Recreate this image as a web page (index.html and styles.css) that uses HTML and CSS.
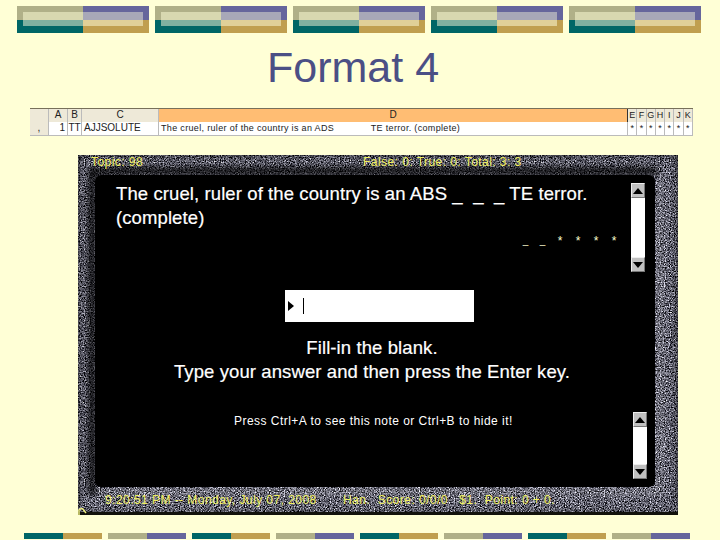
FILE: index.html
```html
<!DOCTYPE html>
<html lang="en">
<head>
<meta charset="utf-8">
<title>Format 4</title>
<link rel="stylesheet" href="styles.css">
</head>
<body>
<div class="slide">
  <div class="top-tiles">
    <div class="tile"><i class="t1"></i><i class="t2"></i><i class="t3"></i><i class="t4"></i></div>
    <div class="tile"><i class="t1"></i><i class="t2"></i><i class="t3"></i><i class="t4"></i></div>
    <div class="tile"><i class="t1"></i><i class="t2"></i><i class="t3"></i><i class="t4"></i></div>
    <div class="tile"><i class="t1"></i><i class="t2"></i><i class="t3"></i><i class="t4"></i></div>
    <div class="tile"><i class="t1"></i><i class="t2"></i><i class="t3"></i><i class="t4"></i></div>
  </div>
  <h1 class="title">Format 4</h1>
  <div class="sheet">
    <div class="c mark hd"></div><div class="c hd">A</div><div class="c hd">B</div><div class="c hd">C</div><div class="c hd sel">D</div>
    <div class="c hd s">E</div><div class="c hd s">F</div><div class="c hd s">G</div><div class="c hd s">H</div><div class="c hd s">I</div><div class="c hd s">J</div><div class="c hd s">K</div>
    <div class="c mark">,</div><div class="c num">1</div><div class="c">TT</div><div class="c left">AJJSOLUTE</div><div class="c left d">The cruel, ruler of the country is an ADS &nbsp; &nbsp; &nbsp; &nbsp; &nbsp; &nbsp; TE terror. (complete)</div>
    <div class="c s">*</div><div class="c s">*</div><div class="c s">*</div><div class="c s">*</div><div class="c s">*</div><div class="c s">*</div><div class="c s">*</div>
  </div>
  <div class="screen">
    <svg class="grain" width="600" height="360" aria-hidden="true">
      <defs>
        <filter id="n" x="0" y="0" width="100%" height="100%" color-interpolation-filters="sRGB">
          <feTurbulence type="fractalNoise" baseFrequency="0.8" numOctaves="2" seed="7"/>
          <feColorMatrix type="matrix" values="1.4 1.4 0 0 -1.02  1.4 1.4 0 0 -1.02  1.45 1.45 0 0 -1.02  0 0 0 0 1"/>
        </filter>
        <filter id="b" x="-10%" y="-10%" width="120%" height="120%"><feGaussianBlur stdDeviation="4"/></filter>
        <filter id="b2" x="-10%" y="-10%" width="120%" height="120%"><feGaussianBlur stdDeviation="3"/></filter>
      </defs>
      <rect width="600" height="360" fill="#000"/>
      <rect width="600" height="360" filter="url(#n)"/>
      <rect x="-3" y="-3" width="606" height="366" fill="none" stroke="#000" stroke-width="8" opacity=".6" filter="url(#b)"/>
      <path d="M14 340V16H580" fill="none" stroke="#000" stroke-width="8" opacity=".85" filter="url(#b2)"/>
      <path d="M20 337H582V20" fill="none" stroke="#fff" stroke-width="5" opacity=".16" filter="url(#b2)"/>
      <rect y="357" width="600" height="3" fill="#12120c"/>
    </svg>
    <div class="status top"><span class="st-a">Topic: 98</span><span class="st-b">False: 0: True: 0: Total: 3: 3</span></div>
    <div class="panel">
      <div class="upper">
        <div class="q">
          <p class="q-text">The cruel, ruler of the country is an ABS _&nbsp; _&nbsp; _ TE terror.<br>(complete)</p>
          <div class="stars"><span class="dash">_</span><span class="dash">_</span><span>*</span><span>*</span><span>*</span><span>*</span></div>
        </div>
        <div class="scroll tall"><b class="btn"><svg width="10" height="6" viewBox="0 0 10 6"><path d="M5 0l5 6H0z"/></svg></b><b class="track"></b><b class="btn"><svg width="10" height="6" viewBox="0 0 10 6"><path d="M0 0h10L5 6z"/></svg></b></div>
      </div>
      <div class="answer"><svg width="8" height="12" viewBox="0 0 8 12"><path d="M2 1l6 5-6 5z"/></svg><span class="caret"></span></div>
      <p class="help">Fill-in the blank.<br>Type your answer and then press the Enter key.</p>
      <div class="lower">
        <p class="note">Press Ctrl+A to see this note or Ctrl+B to hide it!</p>
        <div class="scroll short"><b class="btn"><svg width="10" height="6" viewBox="0 0 10 6"><path d="M5 0l5 6H0z"/></svg></b><b class="track"></b><b class="btn"><svg width="10" height="6" viewBox="0 0 10 6"><path d="M0 0h10L5 6z"/></svg></b></div>
      </div>
    </div>
    <div class="status bottom"><span class="st-c">9:20:51 PM -- Monday, July 07, 2008</span><span class="st-d">Han. &nbsp;Score: 0/0/0 &nbsp; $1. &nbsp;Point: 0 + 0.</span></div>
    <svg class="pointer" width="9" height="7" viewBox="0 0 9 7" aria-hidden="true"><path d="M1 7V2l3-2 4 5" fill="none" stroke="#f0f080" stroke-width="1.5"/></svg>
  </div>
  <div class="bottom-tiles">
    <i class="tl"></i><i class="kp"></i><i class="tl"></i><i class="kp"></i><i class="tl"></i><i class="kp"></i><i class="tl"></i><i class="kp"></i>
  </div>
</div>
</body>
</html>
```
FILE: styles.css
```css
* { box-sizing: border-box; }
html, body { margin: 0; padding: 0; }
body { width: 720px; height: 540px; overflow: hidden; background: #ffffd6; font-family: "Liberation Sans", Arial, sans-serif; }
.slide { width: 720px; height: 540px; padding-top: 6px; display: flex; flex-direction: column; }

.top-tiles { display: flex; gap: 6px; padding-left: 17px; height: 27px; flex: none; }
.tile { width: 132px; height: 27px; display: grid; grid-template-columns: 6px 60px 60px 6px; grid-template-rows: 6px 8px 6px 7px; }
.tile i { display: block; }
.t1 { grid-area: 1 / 1 / 3 / 3; background: linear-gradient(to bottom, #b0b088 6px, transparent 6px), linear-gradient(to right, #b0b088 6px, #d8d8b0 6px); }
.t2 { grid-area: 1 / 3 / 3 / 5; background: linear-gradient(to bottom, #66669c 6px, transparent 6px), linear-gradient(to right, #a8a8b8 60px, #66669c 60px); }
.t3 { grid-area: 3 / 1 / 5 / 3; background: linear-gradient(to top, #006666 7px, transparent 7px), linear-gradient(to right, #006666 6px, #80b0a0 6px); }
.t4 { grid-area: 3 / 3 / 5 / 5; background: linear-gradient(to top, #c09f4f 7px, transparent 7px), linear-gradient(to right, #e0d098 60px, #c09f4f 60px); }

.title { margin: 9px 0 0 267px; height: 50px; font-weight: 400; font-size: 43px; line-height: 50px; color: #4b4f85; flex: none; }

.sheet { margin: 16px 0 0 30px; width: 663px; height: 27px; flex: none; display: grid; grid-template-columns: 19px 19px 14px 77px 469px repeat(7, 9.29px); grid-template-rows: 13px 14px; border-top: 1px solid #77705a; font-size: 10px; color: #222; line-height: 12px; }
.c { text-align: center; background: #fff; border-right: 1px solid #bbb; border-bottom: 1px solid #bbb; overflow: hidden; white-space: nowrap; }
.hd { background: #eee9d8; border-bottom: 0; }
.mark { background: #eee9d8; }
.sel { background: #ffbd73; border-right-color: #333; }
.left { text-align: left; padding-left: 2px; }
.num { text-align: right; padding-right: 2px; }
.d { font-size: 9px; letter-spacing: .33px; }
.s { font-size: 9px; }

.screen { position: relative; margin: 20px 0 0 78px; width: 600px; height: 360px; flex: none; display: flex; flex-direction: column; color: #fff; }
.grain { position: absolute; left: 0; top: 0; display: block; }
.status { position: relative; color: #f0f060; font-size: 12px; letter-spacing: .45px; flex: none; display: flex; white-space: nowrap; }
.status.top { height: 20px; padding: 0 0 0 13px; line-height: 14px; }
.st-a { width: 272px; }
.status.bottom { padding: 6px 0 0 27px; line-height: 14px; }
.st-c { width: 238px; }

.panel { position: relative; margin-left: 17px; width: 560px; height: 312px; flex: none; background: #000; border-radius: 6px; padding-top: 8px; }
.upper { display: flex; height: 89px; padding-left: 21px; }
.q { width: 515px; }
.q-text { margin: -1px 0 0; font-size: 18.5px; line-height: 24px; letter-spacing: .1px; -webkit-text-stroke: .2px #fff; white-space: nowrap; }
.stars { display: flex; justify-content: flex-end; padding-right: 8px; margin-top: 4px; color: #ffffd0; font-size: 12px; line-height: 14px; width: 515px; }
.stars span { width: 18px; text-align: center; }
.stars .dash { font-size: 10px; line-height: 14px; width: 17px; }
.scroll { width: 14px; display: flex; flex-direction: column; flex: none; }
.tall { height: 89px; }
.short { height: 67px; margin-left: 118px; }
.btn { height: 15px; flex: none; background: #c0c0c0; border: 1px solid; border-color: #eee #777 #777 #eee; display: flex; align-items: center; justify-content: center; }
.track { flex: 1; background: #fff; }
.answer { margin: 18px 0 0 190px; width: 189px; height: 32px; background: #fff; display: flex; align-items: center; padding-left: 1px; gap: 9px; }
.caret { width: 1px; height: 16px; background: #000; }
.help { margin: 14px 0 0; padding-right: 6px; text-align: center; font-size: 18.5px; line-height: 24px; letter-spacing: .1px; -webkit-text-stroke: .2px #fff; }
.lower { margin-top: 28px; padding-left: 139px; display: flex; }
.note { margin: 2px 0 0; width: 281px; font-size: 12px; line-height: 14px; letter-spacing: .47px; white-space: nowrap; }
.pointer { position: absolute; left: 0; bottom: 0; }

.bottom-tiles { margin-top: 18px; padding-left: 24px; display: flex; gap: 6px; height: 6px; flex: none; }
.bottom-tiles i { display: block; width: 78px; height: 6px; }
.tl { background: linear-gradient(to right, #006666 39px, #c09f4f 39px); }
.kp { background: linear-gradient(to right, #b0b088 39px, #66669c 39px); }
```
